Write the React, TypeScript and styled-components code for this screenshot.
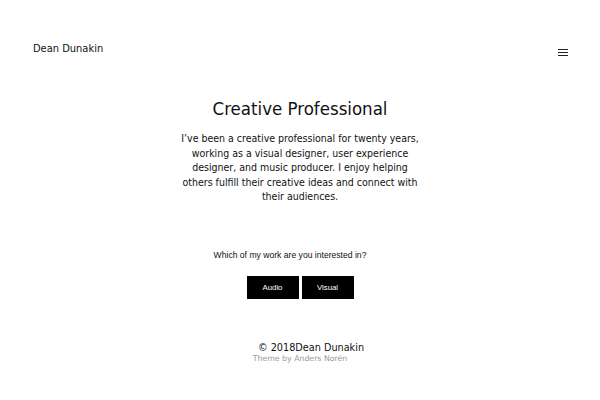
import React from 'react';
import styled, { createGlobalStyle } from 'styled-components';

const GlobalStyle = createGlobalStyle`
  html, body {
    margin: 0;
    padding: 0;
    background: #fff;
  }
  body {
    font-family: "DejaVu Sans", sans-serif;
    color: #111;
  }
`;

const condensed = `
  font-family: "DejaVu Sans Condensed", "DejaVu Sans", sans-serif;
  font-stretch: condensed;
`;

const Page = styled.div`
  width: 600px;
  height: 400px;
  display: flex;
  flex-direction: column;
  overflow: hidden;
`;

const Header = styled.header`
  display: flex;
  justify-content: space-between;
  align-items: center;
  padding: 38px 32px 0 33px;
  height: 20px;
`;

const SiteTitle = styled.a`
  ${condensed}
  font-size: 11px;
  color: #111;
  text-decoration: none;
`;

const MenuButton = styled.button`
  width: 10px;
  height: 12px;
  padding: 0;
  border: 0;
  background: none;
  display: flex;
  flex-direction: column;
  justify-content: center;
  gap: 2px;
  margin-top: 8px;
`;

const MenuBar = styled.span`
  display: block;
  width: 10px;
  height: 1px;
  background: #222;
`;

const Main = styled.main`
  display: flex;
  flex-direction: column;
  align-items: center;
  padding-top: 39px;
`;

const Title = styled.h1`
  ${condensed}
  margin: 0;
  font-size: 18.5px;
  font-weight: 400;
  line-height: 24px;
`;

const Intro = styled.p`
  ${condensed}
  margin: 10px 0 0;
  width: 245px;
  text-align: center;
  font-size: 10.5px;
  line-height: 14.5px;
  color: #111;
`;

const Question = styled.p`
  margin: 46px 0 0;
  padding-right: 20px;
  font-family: "Liberation Sans", Arial, sans-serif;
  font-size: 8.6px;
  color: #111;
`;

const Choices = styled.div`
  display: flex;
  gap: 3px;
  margin-top: 16px;
`;

const Choice = styled.button`
  width: 52px;
  height: 23px;
  border: 0;
  background: #000;
  color: #fff;
  font-family: "Liberation Sans", Arial, sans-serif;
  font-size: 7.8px;
  padding: 0;
`;

const Footer = styled.footer`
  display: flex;
  flex-direction: column;
  align-items: center;
  margin-top: 43px;
`;

const Copy = styled.p`
  margin: 0;
  padding-left: 22px;
  font-size: 9.7px;
  color: #111;
`;

const Credit = styled.p`
  margin: 1px 0 0;
  font-size: 7.8px;
  color: #999;
`;

export default function App() {
  return (
    <>
      <GlobalStyle />
      <Page>
        <Header>
          <SiteTitle href="#">Dean Dunakin</SiteTitle>
          <MenuButton aria-label="Menu">
            <MenuBar />
            <MenuBar />
            <MenuBar />
          </MenuButton>
        </Header>
        <Main>
          <Title>Creative Professional</Title>
          <Intro>
            I’ve been a creative professional for twenty years, working as a visual
            designer, user experience designer, and music producer. I enjoy helping
            others fulfill their creative ideas and connect with their audiences.
          </Intro>
          <Question>Which of my work are you interested in?</Question>
          <Choices>
            <Choice>Audio</Choice>
            <Choice>Visual</Choice>
          </Choices>
        </Main>
        <Footer>
          <Copy>© 2018Dean Dunakin</Copy>
          <Credit>Theme by Anders Norén</Credit>
        </Footer>
      </Page>
    </>
  );
}
